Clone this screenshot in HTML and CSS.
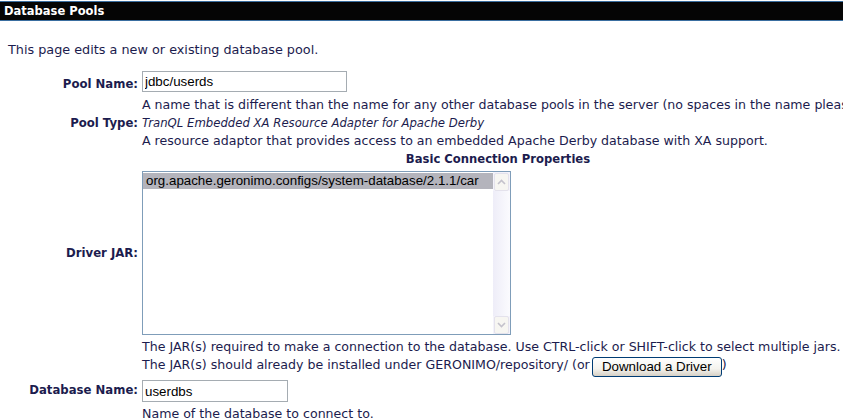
FILE: index.html
```html
<!DOCTYPE html>
<html>
<head>
<meta charset="utf-8">
<title>Database Pools</title>
<link rel="stylesheet" href="styles.css">
</head>
<body>
<div class="titlebar">Database Pools</div>
<div class="content">
  <p class="intro">This page edits a new or existing database pool.</p>
  <div class="form">
    <div class="label">Pool Name:</div>
    <div class="value"><input class="text pool" type="text" value="jdbc/userds"></div>
    <div class="label"></div>
    <div class="value line">A name that is different than the name for any other database pools in the server (no spaces in the name please).</div>
    <div class="label tline">Pool Type:</div>
    <div class="value line"><i class="ptype">TranQL Embedded XA Resource Adapter for Apache Derby</i></div>
    <div class="label"></div>
    <div class="value line">A resource adaptor that provides access to an embedded Apache Derby database with XA support.</div>
    <div class="section">Basic Connection Properties</div>
    <div class="label">Driver JAR:</div>
    <div class="value">
      <div class="listbox">
        <div class="options">
          <div class="option selected">org.apache.geronimo.configs/system-database/2.1.1/car</div>
        </div>
        <div class="scrollbar">
          <div class="sbtn"><svg width="9" height="6" viewBox="0 0 9 6"><path d="M1 5 L4.5 1.5 L8 5" fill="none" stroke="#c4c2cc" stroke-width="1.6"/></svg></div>
          <div class="track"></div>
          <div class="sbtn"><svg width="9" height="6" viewBox="0 0 9 6"><path d="M1 1 L4.5 4.5 L8 1" fill="none" stroke="#c4c2cc" stroke-width="1.6"/></svg></div>
        </div>
      </div>
    </div>
    <div class="label"></div>
    <div class="value line">The JAR(s) required to make a connection to the database. Use CTRL-click or SHIFT-click to select multiple jars.</div>
    <div class="label"></div>
    <div class="value line">The JAR(s) should already be installed under GERONIMO/repository/ (or<button class="btn" type="button">Download a Driver</button>)</div>
    <div class="label">Database Name:</div>
    <div class="value dbrow"><input class="text db" type="text" value="userdbs"></div>
    <div class="label"></div>
    <div class="value line">Name of the database to connect to.</div>
  </div>
</div>
</body>
</html>
```
FILE: styles.css
```css
html, body {
  margin: 0;
  padding: 0;
  background: #ffffff;
  overflow: hidden;
}
body {
  font-family: "DejaVu Sans", Verdana, sans-serif;
  font-size: 12.6px;
  color: #1c1c4e;
}
.titlebar {
  margin-top: 1px;
  height: 18px;
  line-height: 18px;
  background: #050505;
  border-top: 1px solid #3a6ea0;
  border-bottom: 1px solid #3a6ea0;
  color: #ffffff;
  font-weight: bold;
  font-size: 11.5px;
  padding-left: 4px;
}
.content {
  padding-left: 8px;
}
.intro {
  margin: 0;
  padding-top: 20px;
  height: 18px;
  line-height: 18px;
  margin-bottom: 12px;
  font-size: 12.8px;
}
.form {
  display: grid;
  grid-template-columns: 130px 1fr;
  column-gap: 4px;
  width: 980px;
}
.label {
  text-align: right;
  font-weight: bold;
  font-size: 11.7px;
  align-self: center;
  line-height: 18px;
  white-space: nowrap;
}
.value {
  white-space: nowrap;
}
.line {
  height: 18px;
  line-height: 18px;
}
.ptype {
  font-size: 11.7px;
}
.text {
  font-family: "Liberation Sans", Arial, sans-serif;
  font-size: 13.33px;
  color: #000;
  border: 1px solid #a5acb2;
  padding: 1px 2px;
  height: 17px;
  box-sizing: content-box;
  margin: 0;
  outline: none;
  display: block;
}
.pool {
  width: 199px;
  margin-bottom: 4px;
}
.db {
  width: 140px;
  height: 18px;
  margin-bottom: 3px;
}
.dbrow {
  padding-top: 6px;
}
.section {
  grid-column: 1 / span 2;
  text-align: center;
  font-weight: bold;
  font-size: 11.6px;
  height: 18px;
  line-height: 18px;
}
.listbox {
  margin-top: 3px;
  margin-bottom: 3px;
  width: 367px;
  height: 162px;
  border: 1px solid #7f9db9;
  display: flex;
  background: #fff;
}
.options {
  flex: 1;
  padding-top: 1px;
  font-family: "Liberation Sans", Arial, sans-serif;
  font-size: 13.33px;
  color: #000;
}
.option {
  height: 16px;
  line-height: 16px;
  padding-left: 3px;
  white-space: nowrap;
  overflow: hidden;
}
.option.selected {
  background: #b4b4bc;
}
.scrollbar {
  width: 17px;
  display: flex;
  flex-direction: column;
  background: #f4f3fb;
  padding-top: 1px;
}
.sbtn {
  height: 16px;
  margin: 0 1px;
  border: 1px solid #e4e2ec;
  border-radius: 2px;
  background: #f7f6f2;
  display: flex;
  align-items: center;
  justify-content: center;
}
.track {
  flex: 1;
  background: linear-gradient(to right, #eeedf8, #fbfbfe);
}
.btn {
  font-family: "Liberation Sans", Arial, sans-serif;
  font-size: 13.33px;
  color: #000;
  width: 130px;
  height: 20px;
  padding: 0;
  margin: 0 0 0 2px;
  border: 1px solid #003c74;
  border-radius: 3px;
  background: linear-gradient(to bottom, #ffffff 0%, #f4f3ee 60%, #d6d0c5 100%);
  vertical-align: -2px;
}
```
